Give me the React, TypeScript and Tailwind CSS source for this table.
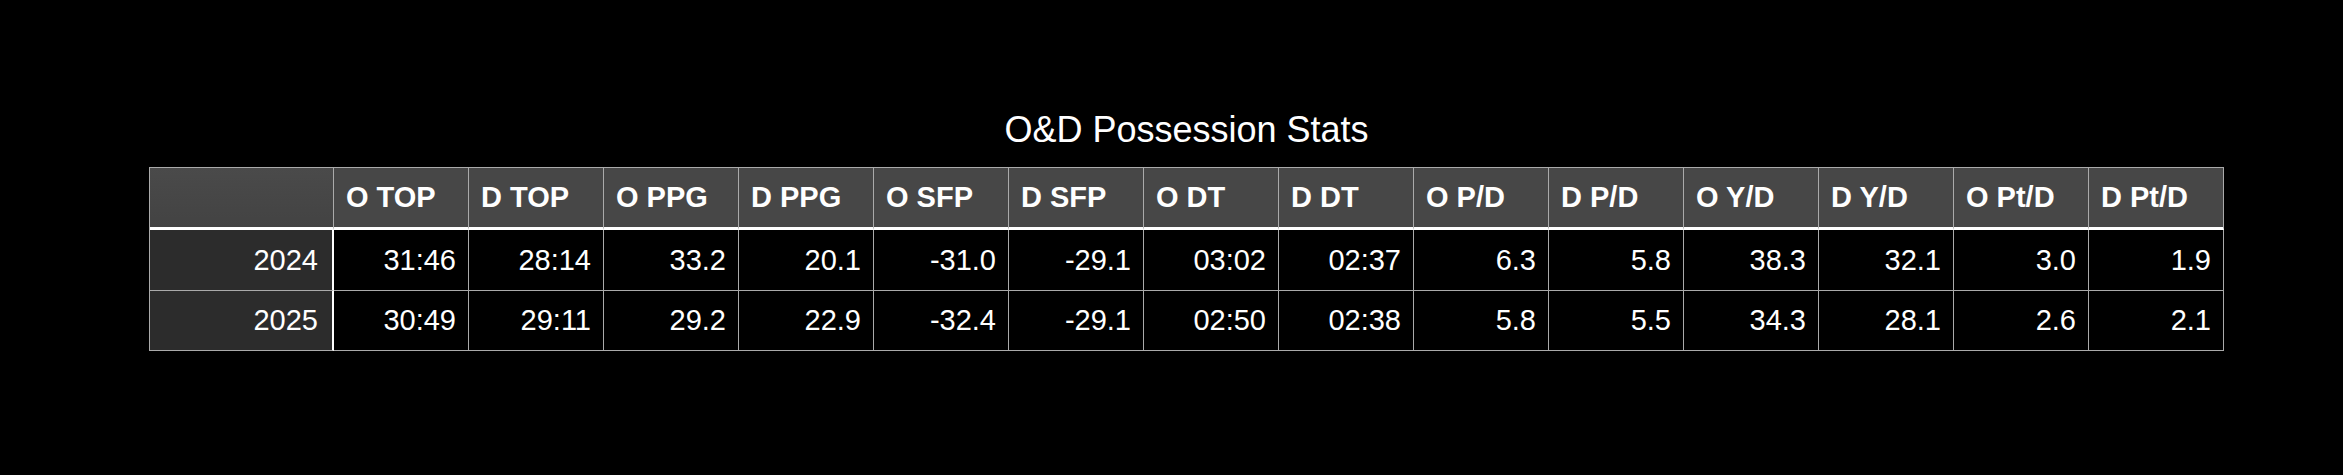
import React from 'react';

const headers = ['O TOP', 'D TOP', 'O PPG', 'D PPG', 'O SFP', 'D SFP', 'O DT', 'D DT', 'O P/D', 'D P/D', 'O Y/D', 'D Y/D', 'O Pt/D', 'D Pt/D'];

const rows: { year: string; values: string[] }[] = [
  { year: '2024', values: ['31:46', '28:14', '33.2', '20.1', '-31.0', '-29.1', '03:02', '02:37', '6.3', '5.8', '38.3', '32.1', '3.0', '1.9'] },
  { year: '2025', values: ['30:49', '29:11', '29.2', '22.9', '-32.4', '-29.1', '02:50', '02:38', '5.8', '5.5', '34.3', '28.1', '2.6', '2.1'] },
];

export default function App() {
  return (
    <div className="w-[2343px] h-[475px] bg-black pt-[112px] pl-[149px] text-white font-['Liberation_Sans',Arial,sans-serif]">
      <div className="w-[2075px] flex flex-col">
        {/* Title */}
        <div className="h-[36px] text-[36px] leading-none text-center mb-[19px]">O&amp;D Possession Stats</div>

        {/* Table */}
        <div className="grid grid-cols-[184px_repeat(14,135px)] border-l border-t border-[#aaaaaa] text-[29px]">
          {/* Header row */}
          <div className="h-[62px] bg-gradient-to-b from-[#4a4a4a] to-[#434343] border-r border-r-[#aaaaaa] border-b-[3px] border-b-white" />
          {headers.map((h) => (
            <div
              key={h}
              className="h-[62px] flex items-center pl-3 font-bold bg-[#474747] border-r border-r-[#aaaaaa] border-b-[3px] border-b-white leading-none"
            >
              {h}
            </div>
          ))}

          {/* Body rows */}
          {rows.map((r, i) => (
            <React.Fragment key={r.year}>
              <div
                className={`flex items-center justify-end pr-[14px] bg-[#2c2c2c] border-r-2 border-r-white border-b border-b-[#aaaaaa] leading-none ${i === 0 ? 'h-[61px]' : 'h-[60px]'}`}
              >
                {r.year}
              </div>
              {r.values.map((v, j) => (
                <div
                  key={j}
                  className={`flex items-center justify-end pr-3 bg-black border-r border-b border-[#aaaaaa] leading-none ${i === 0 ? 'h-[61px]' : 'h-[60px]'}`}
                >
                  {v}
                </div>
              ))}
            </React.Fragment>
          ))}
        </div>
      </div>
    </div>
  );
}
